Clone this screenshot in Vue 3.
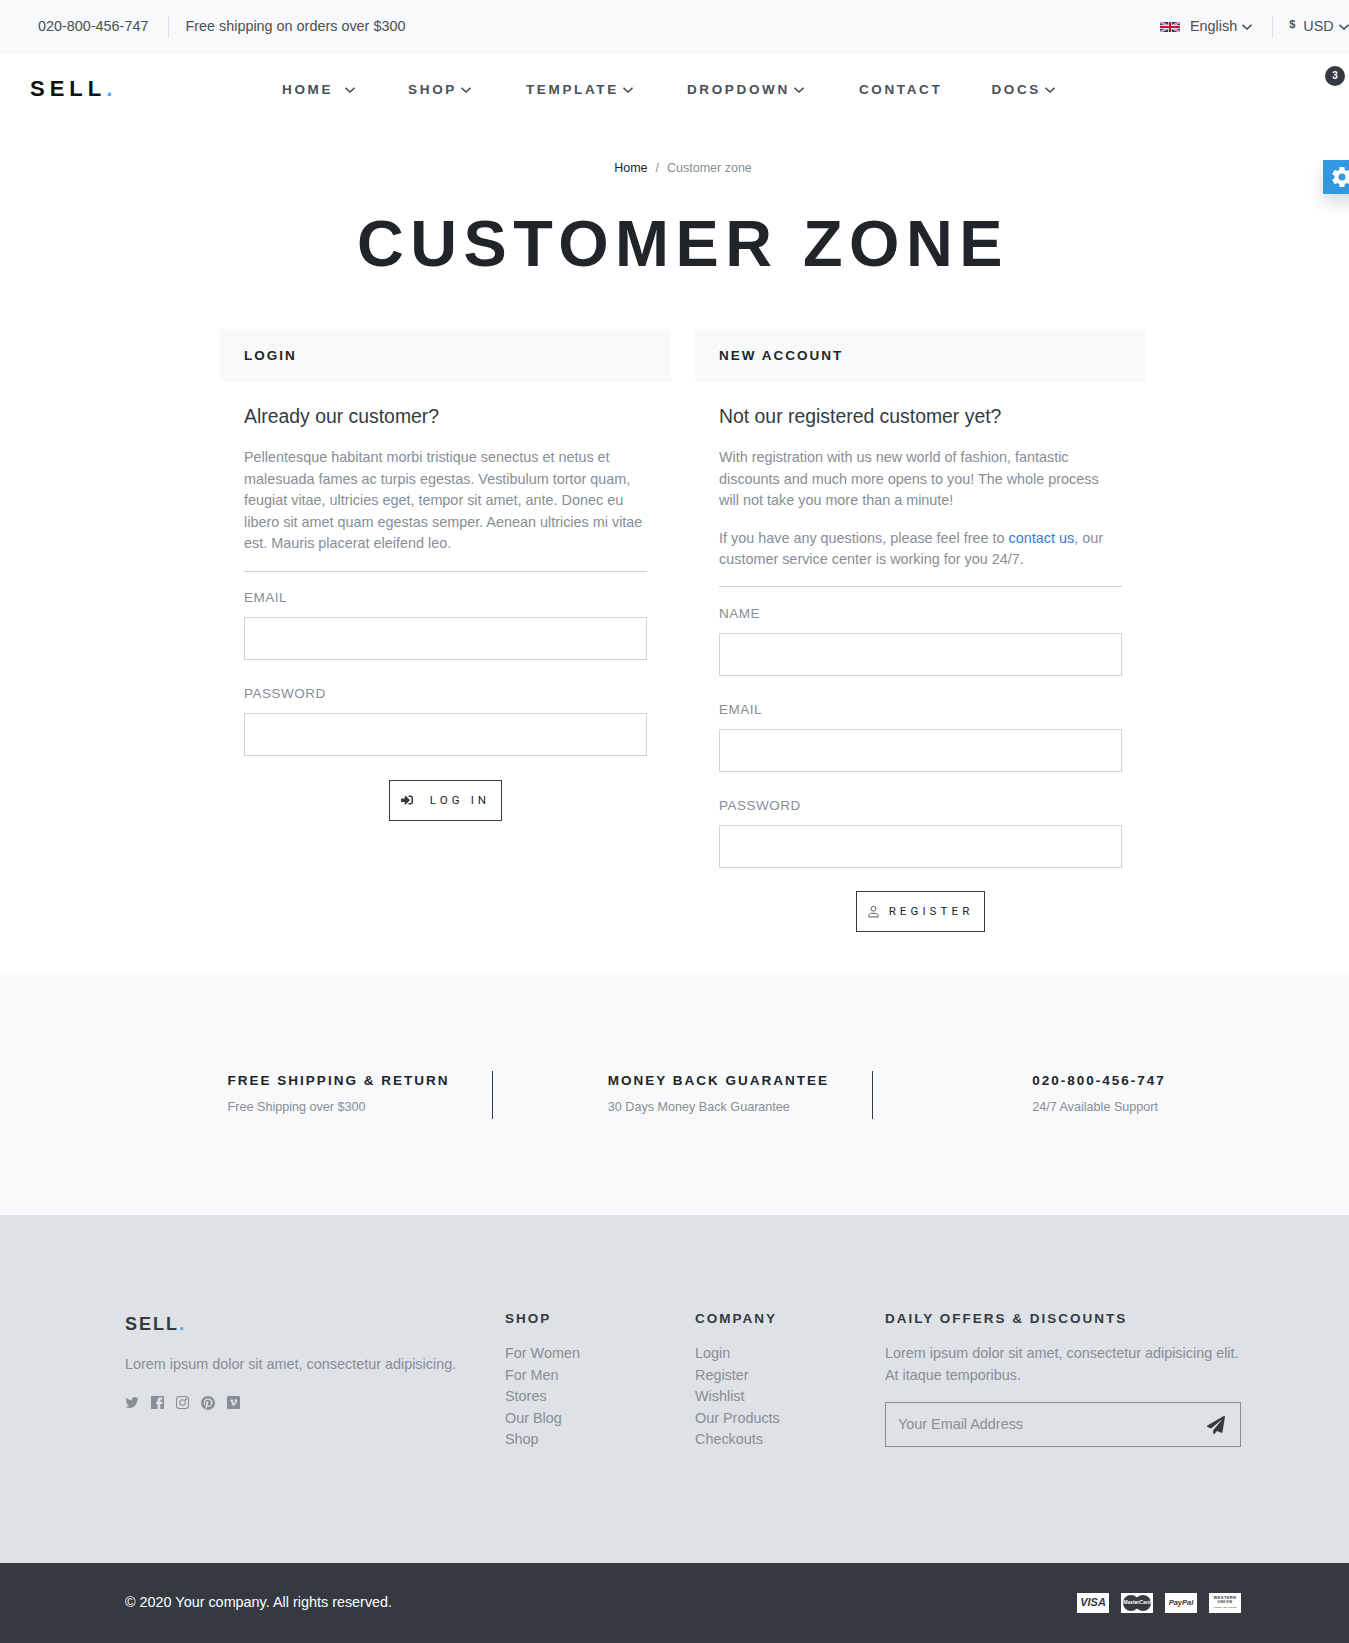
<template>
  <div class="page">
    <div class="topbar">
      <div class="top-left">
        <span class="phone">020-800-456-747</span>
        <span class="top-sep"></span>
        <span>Free shipping on orders over $300</span>
      </div>
      <div class="top-right">
        <svg class="flag" viewBox="0 0 60 30" width="20" height="10">
          <rect width="60" height="30" fill="#2b3f7e" />
          <path d="M0 0L60 30M60 0L0 30" stroke="#fff" stroke-width="6" />
          <path d="M0 0L60 30M60 0L0 30" stroke="#c8102e" stroke-width="2" />
          <path d="M30 0V30M0 15H60" stroke="#fff" stroke-width="10" />
          <path d="M30 0V30M0 15H60" stroke="#c8102e" stroke-width="6" />
        </svg>
        <span class="lang">English</span>
        <svg class="chev" viewBox="0 0 10 6" width="10" height="6"><path d="M.5.8L5 5 9.500.8" /></svg>
        <span class="top-sep right-sep"></span>
        <span class="dollar">$</span>
        <span class="cur">USD</span>
        <svg class="chev" viewBox="0 0 10 6" width="10" height="6"><path d="M.5.8L5 5 9.500.8" /></svg>
      </div>
    </div>

    <header class="navbar">
      <div class="logo">SELL<span class="dot">.</span></div>
      <nav class="menu">
        <a v-for="item in menu" :key="item.label" class="menu-item" :style="{ marginRight: item.gap + 'px' }">
          {{ item.label }}
          <svg v-if="item.caret" class="chev" :class="{ wide: item.label === 'HOME' }" viewBox="0 0 10 6" width="10" height="6"><path d="M.5.8L5 5 9.500.8" /></svg>
        </a>
      </nav>
      <span class="cart-badge">3</span>
    </header>

    <button class="settings-tab" aria-label="Settings">
      <svg viewBox="0 0 24 24" width="24" height="24">
        <path fill="#fff" d="M12 15.5A3.5 3.5 0 0 1 8.5 12 3.5 3.5 0 0 1 12 8.5a3.5 3.5 0 0 1 3.5 3.5 3.5 3.5 0 0 1-3.5 3.5m7.43-2.53c.04-.32.07-.64.07-.97 0-.33-.03-.66-.07-1l2.11-1.63c.19-.15.24-.42.12-.64l-2-3.46c-.12-.22-.39-.31-.61-.22l-2.49 1c-.52-.39-1.06-.73-1.69-.98l-.37-2.65A.506.506 0 0 0 14 2h-4c-.25 0-.46.18-.5.42l-.37 2.65c-.63.25-1.17.59-1.69.98l-2.49-1c-.22-.09-.49 0-.61.22l-2 3.46c-.13.22-.07.49.12.64L4.57 11c-.04.34-.07.67-.07 1 0 .33.03.65.07.97l-2.11 1.66c-.19.15-.25.42-.12.64l2 3.46c.12.22.39.3.61.22l2.49-1.01c.52.4 1.06.74 1.69.99l.37 2.65c.04.24.25.42.5.42h4c.25 0 .46-.18.5-.42l.37-2.65c.63-.26 1.17-.59 1.69-.99l2.49 1.01c.22.08.49 0 .61-.22l2-3.46c.12-.22.07-.49-.12-.64l-2.11-1.66z" />
      </svg>
    </button>

    <section class="hero">
      <div class="crumbs"><a>Home</a><span class="crumb-sep">/</span><span>Customer zone</span></div>
      <h1>CUSTOMER ZONE</h1>
    </section>

    <main class="zone">
      <section class="box">
        <h2 class="box-head">LOGIN</h2>
        <div class="box-body">
          <h3>Already our customer?</h3>
          <p>Pellentesque habitant morbi tristique senectus et netus et malesuada fames ac turpis egestas. Vestibulum tortor quam, feugiat vitae, ultricies eget, tempor sit amet, ante. Donec eu libero sit amet quam egestas semper. Aenean ultricies mi vitae est. Mauris placerat eleifend leo.</p>
          <hr />
          <label v-for="f in loginFields" :key="f" class="field"><span>{{ f }}</span><input type="text" /></label>
          <div class="actions">
            <button class="btn">
              <svg class="btn-icon" viewBox="0 0 512 512" width="12" height="12"><path fill="#343a40" d="M416 448h-84c-6.6 0-12-5.4-12-12v-40c0-6.6 5.4-12 12-12h84c17.7 0 32-14.3 32-32V160c0-17.7-14.3-32-32-32h-84c-6.6 0-12-5.4-12-12V76c0-6.6 5.4-12 12-12h84c53 0 96 43 96 96v192c0 53-43 96-96 96zm-47-201L201 79c-15-15-41-4.5-41 17v96H24c-13.3 0-24 10.7-24 24v96c0 13.3 10.7 24 24 24h136v96c0 21.5 26 32 41 17l168-168c9.3-9.4 9.3-24.6 0-34z" /></svg>
              <span class="login-text">LOG IN</span>
            </button>
          </div>
        </div>
      </section>

      <section class="box">
        <h2 class="box-head">NEW ACCOUNT</h2>
        <div class="box-body">
          <h3>Not our registered customer yet?</h3>
          <p>With registration with us new world of fashion, fantastic discounts and much more opens to you! The whole process will not take you more than a minute!</p>
          <p class="second">If you have any questions, please feel free to <a class="link">contact us</a>, our customer service center is working for you 24/7.</p>
          <hr />
          <label v-for="f in registerFields" :key="f" class="field"><span>{{ f }}</span><input type="text" /></label>
          <div class="actions">
            <button class="btn">
              <svg class="btn-icon" viewBox="0 0 12 14" width="11" height="13" fill="none" stroke="#495057" stroke-width="1"><circle cx="6" cy="4" r="2.6" /><path d="M1 13v-1.5C1 9.8 2.4 9 4 9h4c1.6 0 3 .8 3 2.5V13z" /></svg>
              <span>REGISTER</span>
            </button>
          </div>
        </div>
      </section>
    </main>

    <section class="features">
      <div v-for="(f, i) in features" :key="f.title" class="feature" :class="{ last: i === features.length - 1 }">
        <span class="feature-icon"></span>
        <div>
          <h4>{{ f.title }}</h4>
          <p>{{ f.text }}</p>
        </div>
      </div>
    </section>

    <footer class="footer">
      <div class="foot-col">
        <div class="foot-logo">SELL<span class="dot">.</span></div>
        <p class="foot-about">Lorem ipsum dolor sit amet, consectetur adipisicing.</p>
        <div class="socials">
          <svg viewBox="1 3 22 19" width="14" height="13"><path d="M22.46 6c-.77.35-1.6.58-2.46.69.88-.53 1.56-1.37 1.88-2.38-.83.5-1.75.85-2.72 1.05C18.37 4.5 17.26 4 16 4c-2.35 0-4.27 1.92-4.27 4.29 0 .34.04.67.11.98C8.28 9.09 5.11 7.38 3 4.79c-.37.63-.58 1.37-.58 2.15 0 1.49.75 2.81 1.91 3.56-.71 0-1.37-.2-1.95-.5v.03c0 2.08 1.48 3.82 3.44 4.21a4.22 4.22 0 0 1-1.93.07 4.28 4.28 0 0 0 4 2.98 8.521 8.521 0 0 1-5.33 1.84c-.34 0-.68-.02-1.02-.06C3.44 20.29 5.7 21 8.12 21 16 21 20.33 14.46 20.33 8.79c0-.19 0-.37-.01-.56.84-.6 1.56-1.36 2.14-2.23z" /></svg>
          <svg viewBox="3 3 18 18" width="13" height="13"><path fill-rule="evenodd" d="M4 3h16a1 1 0 0 1 1 1v16a1 1 0 0 1-1 1h-4v-7h3v-3h-3V9a1 1 0 0 1 1-1h2V5h-2.500A3.500 3.500 0 0 0 12 8.500V11h-2v3h2v7H4a1 1 0 0 1-1-1V4a1 1 0 0 1 1-1z" /></svg>
          <svg class="ig" viewBox="0 0 14 14" width="13" height="13"><rect x=".6" y=".6" width="12.800" height="12.800" rx="3" /><circle cx="7" cy="7" r="3" /><circle cx="10.600" cy="3.400" r=".5" /></svg>
          <svg viewBox="2 2 20 20" width="14" height="14"><path d="M9.040 21.540c.96.29 1.930.46 2.960.46a10 10 0 0 0 10-10A10 10 0 0 0 12 2 10 10 0 0 0 2 12c0 4.250 2.670 7.900 6.440 9.340-.09-.78-.18-2.070 0-2.960l1.150-4.940s-.29-.58-.29-1.500c0-1.380.86-2.410 1.840-2.410.86 0 1.260.63 1.260 1.440 0 .86-.57 2.090-.86 3.270-.17.98.52 1.840 1.520 1.840 1.780 0 3.160-1.900 3.160-4.580 0-2.400-1.720-4.040-4.190-4.040-2.820 0-4.480 2.100-4.480 4.310 0 .86.28 1.730.74 2.300.09.06.09.14.06.29l-.29 1.090c0 .17-.11.23-.28.11-1.280-.56-2.020-2.380-2.020-3.850 0-3.160 2.240-6.030 6.560-6.030 3.440 0 6.120 2.470 6.120 5.750 0 3.440-2.130 6.200-5.180 6.200-.97 0-1.920-.52-2.260-1.130l-.67 2.370c-.23.86-.86 2.010-1.320 2.700v-.03z" /></svg>
          <svg viewBox="0 0 24 24" width="13" height="13"><rect width="24" height="24" rx="2" /><path fill="#dee2e6" transform="translate(3.600 3.600) scale(.7)" d="M22 7.420c-.09 1.950-1.450 4.620-4.080 8.020C15.200 19 12.900 20.750 11 20.750c-1.150 0-2.140-1.080-2.950-3.250-.55-1.960-1.050-3.940-1.610-5.920-.6-2.160-1.240-3.240-1.940-3.240-.14 0-.66.32-1.560.95L2 8.070c1-.87 1.960-1.740 2.920-2.610 1.320-1.140 2.310-1.740 2.960-1.800 1.560-.16 2.530.92 2.890 3.200.38 2.470.64 4 .78 4.600.46 2.040.96 3.060 1.500 3.060.42 0 1.050-.64 1.900-2 .84-1.350 1.280-2.380 1.340-3.080.13-1.160-.32-1.740-1.340-1.740-.48 0-.97.11-1.480.33.98-3.200 2.860-4.760 5.620-4.660 2.040.06 3 1.400 2.910 4.050z" /></svg>
        </div>
      </div>
      <div v-for="col in footerLinks" :key="col.title" class="foot-col">
        <h5>{{ col.title }}</h5>
        <a v-for="l in col.links" :key="l" class="foot-link">{{ l }}</a>
      </div>
      <div class="foot-col">
        <h5>DAILY OFFERS &amp; DISCOUNTS</h5>
        <p class="foot-offer">Lorem ipsum dolor sit amet, consectetur adipisicing elit. At itaque temporibus.</p>
        <div class="subscribe">
          <input type="text" placeholder="Your Email Address" />
          <svg viewBox="0 0 512 512" width="18" height="18"><path fill="#343a40" d="M476 3.200L12.500 270.600c-18.100 10.400-15.800 35.600 2.200 43.200L121 358.400l287.300-253.200c5.500-4.900 13.300 2.600 8.600 8.300L176 407v80.500c0 23.600 28.500 32.900 42.500 15.800L282 426l124.600 52.200c14.200 6 30.400-2.900 33-18.200l72-432C515 7.800 493.300-6.800 476 3.200z" /></svg>
        </div>
      </div>
    </footer>

    <div class="copyright">
      <span>© 2020 Your company. All rights reserved.</span>
      <div class="cards">
        <span class="card visa">VISA</span>
        <span class="card master"><i></i><i></i><b>MasterCard</b></span>
        <span class="card paypal">PayPal</span>
        <span class="card union">WESTERN<br />UNION<small>MONEY TRANSFER</small></span>
      </div>
    </div>
  </div>
</template>

<script setup>
const menu = [
  { label: "HOME", caret: true, gap: 53 },
  { label: "SHOP", caret: true, gap: 55 },
  { label: "TEMPLATE", caret: true, gap: 54 },
  { label: "DROPDOWN", caret: true, gap: 55 },
  { label: "CONTACT", caret: false, gap: 49 },
  { label: "DOCS", caret: true, gap: 0 },
];
const loginFields = ["EMAIL", "PASSWORD"];
const registerFields = ["NAME", "EMAIL", "PASSWORD"];
const features = [
  { title: "FREE SHIPPING & RETURN", text: "Free Shipping over $300" },
  { title: "MONEY BACK GUARANTEE", text: "30 Days Money Back Guarantee" },
  { title: "020-800-456-747", text: "24/7 Available Support" },
];
const footerLinks = [
  { title: "SHOP", links: ["For Women", "For Men", "Stores", "Our Blog", "Shop"] },
  { title: "COMPANY", links: ["Login", "Register", "Wishlist", "Our Products", "Checkouts"] },
];
</script>

<style>
html, body { overflow-x: hidden; }
</style>

<style scoped>
.page {
  width: 1366px;
  position: relative;
  font-family: "Liberation Sans", Arial, sans-serif;
  font-size: 14.4px;
  line-height: 21.6px;
  color: #868e96;
  background: #fff;
}
.topbar {
  height: 54px;
  background: #f8f9fa;
  display: flex;
  align-items: center;
  justify-content: space-between;
  color: #495057;
  padding-left: 38px;
}
.top-left, .top-right { display: flex; align-items: center; }
.top-sep { width: 1px; height: 22px; background: #dee2e6; margin: 0 16px 0 20px; }
.top-right { width: 206px; }
.flag { margin-right: 10px; }
.lang { margin-right: 5px; }
.right-sep { margin: 0 16px 0 20px; }
.dollar { font-size: 11px; font-weight: 700; margin: -4px 8px 0 0; }
.cur { margin-right: 5px; }
.chev { fill: none; stroke: #495057; stroke-width: 1.6; flex: none; }
.chev.wide { margin-left: 8px; }

.navbar {
  height: 70px;
  display: flex;
  align-items: center;
  position: relative;
  padding-left: 30px;
}
.logo {
  width: 252px;
  font-size: 22px;
  font-weight: 700;
  letter-spacing: 5px;
  color: #111;
}
.dot { color: #4dabf7; }
.menu { display: flex; padding-top: 2px; }
.menu-item {
  font-size: 13.5px;
  font-weight: 700;
  letter-spacing: 2.65px;
  color: #495057;
  display: flex;
  align-items: center;
  gap: 4px;
}
.cart-badge {
  position: absolute;
  left: 1325px;
  top: 12px;
  width: 20px;
  height: 20px;
  border-radius: 50%;
  background: #343a40;
  color: #fff;
  font-size: 10px;
  line-height: 20px;
  font-weight: 700;
  text-align: center;
}
.settings-tab {
  position: absolute;
  left: 1323px;
  top: 160px;
  width: 43px;
  height: 34px;
  padding: 0 0 0 7px;
  border: 0;
  background: #3498e0;
  box-shadow: 0 8px 16px rgba(0, 0, 0, 0.15);
  display: flex;
  align-items: center;
}

.hero { text-align: center; padding-top: 34px; }
.crumbs { font-size: 12.5px; line-height: 20px; color: #868e96; }
.crumbs a { color: #212529; }
.crumb-sep { margin: 0 8px; }
h1 {
  margin: 24px 0 0;
  font-size: 64.8px;
  line-height: 84px;
  font-weight: 700;
  letter-spacing: 6.48px;
  color: #212529;
}

.zone {
  width: 926px;
  margin: 43px auto 43px;
  display: grid;
  grid-template-columns: 451px 451px;
  column-gap: 24px;
}
.box-head {
  margin: 0;
  height: 53px;
  padding-left: 24px;
  background: #f8f9fa;
  font-size: 13.5px;
  line-height: 53px;
  font-weight: 700;
  letter-spacing: 2px;
  color: #212529;
}
.box-body { padding: 22px 24px 0; }
h3 {
  margin: 0 0 19px;
  font-size: 19.4px;
  line-height: 24px;
  font-weight: 400;
  color: #343a40;
}
.box-body p { margin: 0 0 16px; }
.box-body .second { margin-bottom: 15px; }
.link { color: #2f7fd6; }
hr { border: 0; border-top: 1px solid #ced4da; margin: 0 0 15px; }
.second + hr { margin-bottom: 16px; }
.field { display: block; margin-bottom: 23px; }
.field span {
  display: block;
  font-size: 13.5px;
  line-height: 22px;
  letter-spacing: 0.5px;
  color: #868e96;
  margin-bottom: 8px;
}
.field input {
  display: block;
  width: 100%;
  height: 43px;
  box-sizing: border-box;
  border: 1px solid #ced4da;
  background: #fff;
  outline: 0;
}
.actions { display: flex; justify-content: center; margin-top: 24px; }
.box:last-child .actions { margin-top: 23px; }
.btn {
  height: 41px;
  padding: 0 11px;
  background: #fff;
  border: 1px solid #343a40;
  display: flex;
  align-items: center;
  gap: 10px;
  font-family: Roboto, sans-serif;
  font-size: 11.5px;
  font-weight: 400;
  letter-spacing: 4.1px;
  color: #212529;
}
.login-text { margin-left: 7px; }

.features {
  height: 240px;
  background: #f8f9fa;
  padding: 0 113px;
  display: grid;
  grid-template-columns: repeat(3, 380px);
  align-items: center;
}
.feature {
  height: 48px;
  display: flex;
  justify-content: center;
  border-right: 1px solid #343a40;
  box-sizing: border-box;
}
.feature.last { border-right: 0; }
.feature-icon { width: 72px; }
.feature h4 {
  margin: 0;
  font-size: 13.5px;
  line-height: 19px;
  font-weight: 700;
  letter-spacing: 2px;
  color: #212529;
}
.feature p {
  margin: 7px 0 0;
  font-size: 12.6px;
  line-height: 20px;
}

.footer {
  height: 348px;
  box-sizing: border-box;
  background: #dee2e6;
  padding: 93px 113px 0;
  display: grid;
  grid-template-columns: 380px 190px 190px 380px;
}
.foot-col { padding: 0 12px; }
.foot-logo {
  margin-top: 5px;
  font-size: 18px;
  line-height: 22px;
  font-weight: 700;
  letter-spacing: 2px;
  color: #343a40;
}
.foot-about { margin: 19px 0 0; }
.socials { display: flex; align-items: center; gap: 12px; margin-top: 20px; }
.socials svg { fill: #868e96; }
.socials .ig { fill: none; stroke: #868e96; stroke-width: 1.1; }
h5 {
  margin: 0 0 13px;
  font-size: 13.5px;
  line-height: 22px;
  font-weight: 700;
  letter-spacing: 2px;
  color: #343a40;
}
.foot-link { display: block; color: #868e96; }
.foot-offer { margin: 0; }
.subscribe {
  margin-top: 16px;
  height: 45px;
  box-sizing: border-box;
  border: 1px solid #868e96;
  display: flex;
  align-items: center;
  padding: 0 15px 0 12px;
}
.subscribe input {
  flex: 1;
  min-width: 0;
  border: 0;
  padding: 0;
  background: transparent;
  outline: 0;
  font: inherit;
  color: #495057;
}
.subscribe input::placeholder { color: #868e96; opacity: 1; }

.copyright {
  height: 80px;
  padding: 0 125px;
  background: #343a40;
  color: #fff;
  display: flex;
  align-items: center;
  justify-content: space-between;
}
.cards { display: flex; gap: 12px; }
.card {
  width: 32px;
  height: 20px;
  background: #fff;
  color: #343a40;
  display: flex;
  align-items: center;
  justify-content: center;
  position: relative;
  overflow: hidden;
}
.visa { font-size: 11px; font-style: italic; font-weight: 700; }
.master i {
  position: absolute;
  top: 2px;
  width: 16px;
  height: 16px;
  border-radius: 50%;
  background: #343a40;
}
.master i:first-child { left: 2px; }
.master i:nth-child(2) { right: 2px; }
.master b { position: relative; color: #fff; font-size: 5px; font-style: italic; }
.paypal { font-size: 7.5px; font-style: italic; font-weight: 700; }
.union {
  display: block;
  padding-top: 3px;
  box-sizing: border-box;
  font-size: 4px;
  line-height: 4.5px;
  font-weight: 700;
  letter-spacing: 0.4px;
  text-align: center;
}
.union small { display: block; font-size: 2.5px; line-height: 5px; letter-spacing: 0; font-weight: 400; }
</style>
